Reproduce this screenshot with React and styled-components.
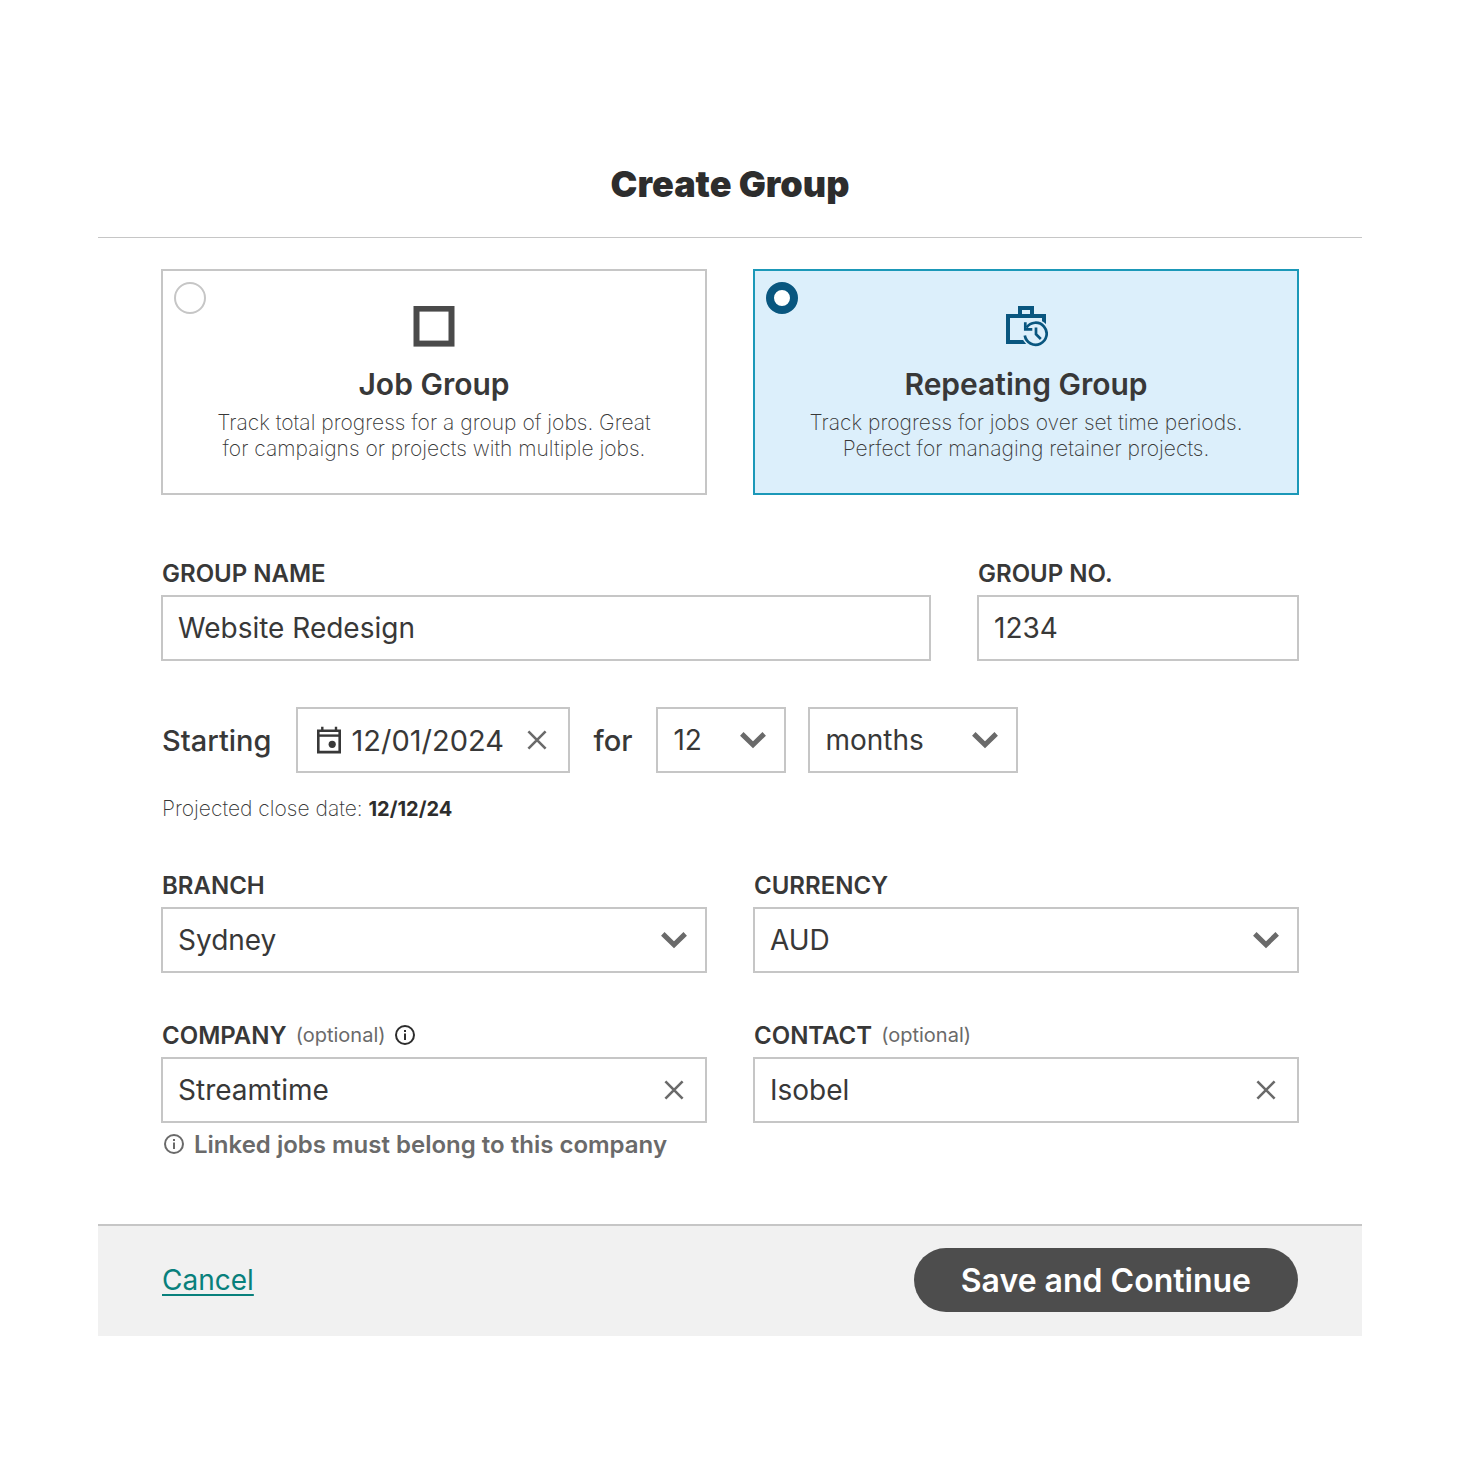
import React, { useState } from 'react';
import styled, { createGlobalStyle } from 'styled-components';

const GlobalStyle = createGlobalStyle`
    *, *::before, *::after {
        box-sizing: border-box;
    }
    body {
        margin: 0;
        background: #ffffff;
        color: #383838;
        font-family: Inter, "Liberation Sans", sans-serif;
    }
    input, select, button {
        font-family: inherit;
        color: inherit;
    }
`;

const Page = styled.main`
    padding: 160px 102px 128px 98px;
`;

const Header = styled.header`
    padding-bottom: 28px;
    border-bottom: 1px solid #c6c6c6;
    text-align: center;
`;

const Title = styled.h1`
    margin: 0;
    color: #2d2d2d;
    font-size: 36px;
    font-weight: 900;
    line-height: 49px;
`;

const Body = styled.div`
    padding: 31px 63px 65px;
`;

const Columns = styled.div`
    display: grid;
    grid-template-columns: ${props => props.$columns || 'minmax(0, 1fr) minmax(0, 1fr)'};
    gap: 46px;
    margin-top: ${props => props.$top || 0}px;
`;

const Options = styled(Columns)`
    margin: 0;
    padding: 0;
    border: 0;
`;

const Option = styled.label`
    position: relative;
    display: flex;
    flex-direction: column;
    align-items: center;
    padding: 35px 40px 31px;
    border: 2px solid ${props => props.$active ? '#1b98b8' : '#c6c6c6'};
    background: ${props => props.$active ? '#dceffb' : '#ffffff'};
    text-align: center;
    cursor: pointer;
`;

const Radio = styled.input`
    appearance: none;
    position: absolute;
    top: 11px;
    left: 11px;
    width: 32px;
    height: 32px;
    margin: 0;
    border: 2px solid #c6c6c6;
    border-radius: 50%;
    background: #ffffff;
    &:checked {
        border: 8px solid #09567f;
    }
`;

const OptionTitle = styled.span`
    margin-top: 16px;
    font-size: 30px;
    font-weight: 600;
    line-height: 40px;
`;

const OptionText = styled.span`
    margin-top: 6px;
    font-size: 21px;
    font-weight: 200;
    line-height: 26px;
    white-space: pre-line;
`;

const LabelRow = styled.div`
    display: flex;
    align-items: center;
    gap: 9px;
    margin-bottom: 5px;
    padding-left: 1px;
`;

const Label = styled.label`
    font-size: 24px;
    font-weight: 600;
    line-height: 32px;
    text-transform: uppercase;
`;

const Optional = styled.span`
    padding-bottom: 2px;
    color: #6a6a6a;
    font-size: 20px;
    line-height: 30px;
`;

const Box = styled.div`
    position: relative;
    display: flex;
    align-items: center;
    width: ${props => props.$width || '100%'};
    height: 66px;
    border: 2px solid #c6c6c6;
    background: #ffffff;
`;

const TextInput = styled.input`
    flex: 1;
    min-width: 0;
    height: 100%;
    padding: 0 0 0 15px;
    border: 0;
    outline: 0;
    background: transparent;
    font-size: 28px;
`;

const DateInput = styled(TextInput)`
    padding-left: 10px;
    font-size: 29px;
`;

const Select = styled.select`
    appearance: none;
    width: 100%;
    height: 100%;
    padding: 0 50px 0 15px;
    border: 0;
    outline: 0;
    background: transparent;
    font-size: 28px;
`;

const Arrow = styled.svg`
    position: absolute;
    top: 23px;
    right: 17px;
    pointer-events: none;
`;

const IconButton = styled.button`
    display: flex;
    margin: 0;
    padding: 0 ${props => props.$side || 0}px;
    border: 0;
    background: transparent;
    cursor: pointer;
`;

const Period = styled.div`
    display: flex;
    align-items: center;
    margin-top: 46px;
`;

const PeriodLabel = styled.label`
    padding: 0 24px 0 ${props => props.$left || 0}px;
    font-size: 29px;
    font-weight: 500;
`;

const PeriodGap = styled.div`
    width: 22px;
`;

const CalendarSlot = styled.span`
    display: flex;
    padding-left: 18px;
`;

const CloseDate = styled.p`
    margin: 22px 0 0;
    padding-left: 1px;
    font-size: 21px;
    font-weight: 200;
    line-height: 28px;
`;

const Strong = styled.strong`
    color: #2d2d2d;
    font-size: 20px;
    font-weight: 700;
`;

const Hint = styled.p`
    display: flex;
    align-items: center;
    gap: 10px;
    margin: 8px 0 0;
    padding-left: 3px;
    color: #6a6a6a;
    font-size: 24px;
    font-weight: 600;
    line-height: 28px;
`;

const Footer = styled.footer`
    display: flex;
    align-items: center;
    justify-content: space-between;
    padding: 22px 64px 24px;
    border-top: 2px solid #c6c6c6;
    background: #f1f1f1;
`;

const Cancel = styled.a`
    color: #08807c;
    font-size: 28px;
    text-decoration: underline;
    text-decoration-thickness: 2px;
    text-underline-offset: 4px;
`;

const Save = styled.button`
    height: 64px;
    padding: 0 47px;
    border: 0;
    border-radius: 32px;
    background: #4d4d4d;
    color: #ffffff;
    font-size: 32px;
    font-weight: 600;
    cursor: pointer;
`;

const SquareIcon = () => (
    <svg width="42" height="42" viewBox="0 0 42 42" fill="none">
        <rect x="3.5" y="2.6" width="35" height="35" stroke="#4a4a4a" strokeWidth="6" />
    </svg>
);

const RepeatIcon = () => (
    <svg width="44" height="42" viewBox="-2 0 44 42" fill="none" stroke="#09567f">
        <path d="M24 36H2V10H38V20M14 9V2H26V9" strokeWidth="4" />
        <circle cx="29.7" cy="27.7" r="14" fill="#dceffb" stroke="none" />
        <path d="M20.5 21.6A11 11 0 1 1 18.8 29.5" strokeWidth="2.7" />
        <path d="M19.3 16.3V23.4H26.3M30 21.5V28.2L34.8 33" strokeWidth="2.7" />
    </svg>
);

const CalendarIcon = () => (
    <svg width="26" height="28" viewBox="0 0 26 28" fill="none" stroke="#383838">
        <path d="M2.3 4.7H23.7V26.1H2.3Z" strokeWidth="2.6" />
        <path d="M1 9.6H25" strokeWidth="2.4" />
        <path d="M6.3 0.7V5M20 0.7V5" strokeWidth="2.4" />
        <circle cx="16.2" cy="18.3" r="3.6" fill="#383838" stroke="none" />
    </svg>
);

const ChevronIcon = () => (
    <Arrow width="28" height="17" viewBox="0 0 28 17" fill="none" stroke="#6a6a6a" strokeWidth="5">
        <path d="M2.8 1.9L14 12.7L25.2 1.9" />
    </Arrow>
);

const CloseIcon = () => (
    <svg width="20" height="20" viewBox="0 0 20 20" fill="none" stroke="#6a6a6a" strokeWidth="2.6">
        <path d="M1.4 1.4L18.6 18.6M18.6 1.4L1.4 18.6" />
    </svg>
);

const InfoIcon = ({ color }) => (
    <svg width="20" height="22" viewBox="0 0 20 22" fill="none" stroke={color} strokeWidth="2">
        <circle cx="10" cy="10" r="9" />
        <path d="M10 5V7M10 8.5V15" />
    </svg>
);

const Dropdown = ({ width, options, ...rest }) => (
    <Box $width={width}>
        <Select {...rest}>
            {options.map(option => <option key={option}>{option}</option>)}
        </Select>
        <ChevronIcon />
    </Box>
);

const ClearableInput = ({ id, initial }) => {
    const [value, setValue] = useState(initial);
    return (
        <Box>
            <TextInput id={id} value={value} onChange={e => setValue(e.target.value)} />
            <IconButton type="button" $side={21} aria-label="Clear" onClick={() => setValue('')}>
                <CloseIcon />
            </IconButton>
        </Box>
    );
};

const App = () => {
    const [type, setType] = useState('repeating');
    const [date, setDate] = useState('12/01/2024');

    return (
        <Page>
            <GlobalStyle />
            <form onSubmit={e => e.preventDefault()}>
                <Header>
                    <Title>Create Group</Title>
                </Header>
                <Body>
                    <Options as="fieldset" aria-label="Group type">
                        <Option $active={type === 'job'}>
                            <Radio type="radio" name="type" checked={type === 'job'} onChange={() => setType('job')} />
                            <SquareIcon />
                            <OptionTitle>Job Group</OptionTitle>
                            <OptionText>
                                {'Track total progress for a group of jobs. Great\nfor campaigns or projects with multiple jobs.'}
                            </OptionText>
                        </Option>
                        <Option $active={type === 'repeating'}>
                            <Radio type="radio" name="type" checked={type === 'repeating'} onChange={() => setType('repeating')} />
                            <RepeatIcon />
                            <OptionTitle>Repeating Group</OptionTitle>
                            <OptionText>
                                {'Track progress for jobs over set time periods.\nPerfect for managing retainer projects.'}
                            </OptionText>
                        </Option>
                    </Options>

                    <Columns $columns="minmax(0, 55fr) minmax(0, 23fr)" $top={63}>
                        <div>
                            <LabelRow><Label htmlFor="name">Group name</Label></LabelRow>
                            <Box><TextInput id="name" defaultValue="Website Redesign" /></Box>
                        </div>
                        <div>
                            <LabelRow><Label htmlFor="number">Group no.</Label></LabelRow>
                            <Box><TextInput id="number" defaultValue="1234" /></Box>
                        </div>
                    </Columns>

                    <Period>
                        <PeriodLabel htmlFor="start" $left={1}>Starting</PeriodLabel>
                        <Box $width="274px">
                            <CalendarSlot><CalendarIcon /></CalendarSlot>
                            <DateInput id="start" value={date} onChange={e => setDate(e.target.value)} />
                            <IconButton type="button" $side={21} aria-label="Clear date" onClick={() => setDate('')}>
                                <CloseIcon />
                            </IconButton>
                        </Box>
                        <PeriodLabel htmlFor="count" $left={24}>for</PeriodLabel>
                        <Dropdown id="count" width="130px" options={['12', '6', '3']} />
                        <PeriodGap />
                        <Dropdown aria-label="Unit" width="210px" options={['months', 'weeks', 'years']} />
                    </Period>
                    <CloseDate>Projected close date: <Strong>12/12/24</Strong></CloseDate>

                    <Columns $top={47}>
                        <div>
                            <LabelRow><Label htmlFor="branch">Branch</Label></LabelRow>
                            <Dropdown id="branch" options={['Sydney', 'Melbourne']} />
                        </div>
                        <div>
                            <LabelRow><Label htmlFor="currency">Currency</Label></LabelRow>
                            <Dropdown id="currency" options={['AUD', 'USD', 'NZD']} />
                        </div>
                    </Columns>

                    <Columns $top={47}>
                        <div>
                            <LabelRow>
                                <Label htmlFor="company">Company</Label>
                                <Optional>(optional)</Optional>
                                <IconButton type="button" aria-label="About company"><InfoIcon color="#2d2d2d" /></IconButton>
                            </LabelRow>
                            <ClearableInput id="company" initial="Streamtime" />
                            <Hint><InfoIcon color="#6a6a6a" />Linked jobs must belong to this company</Hint>
                        </div>
                        <div>
                            <LabelRow>
                                <Label htmlFor="contact">Contact</Label>
                                <Optional>(optional)</Optional>
                            </LabelRow>
                            <ClearableInput id="contact" initial="Isobel" />
                        </div>
                    </Columns>
                </Body>
                <Footer>
                    <Cancel href="#cancel">Cancel</Cancel>
                    <Save type="submit">Save and Continue</Save>
                </Footer>
            </form>
        </Page>
    );
};

export default App;
